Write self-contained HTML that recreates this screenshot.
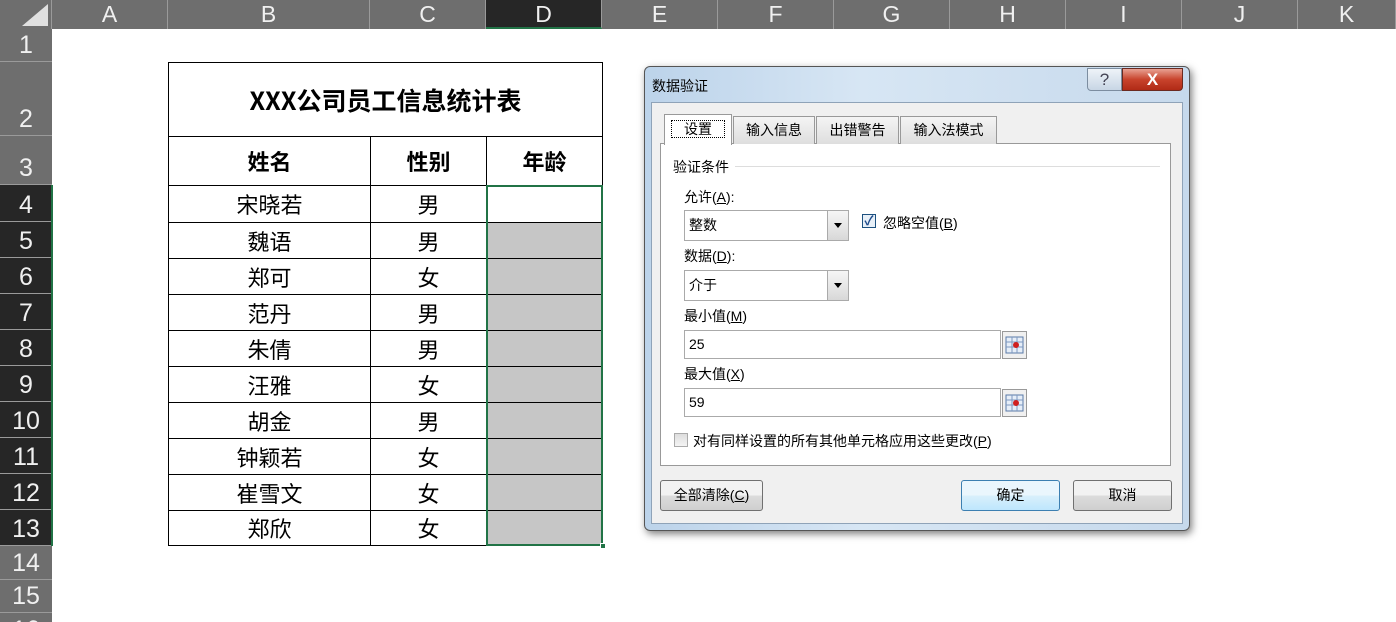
<!DOCTYPE html>
<html><head><meta charset="utf-8"><style>
*{margin:0;padding:0;box-sizing:border-box}
body{width:1396px;height:622px;overflow:hidden;background:#fff;position:relative;font-family:"Liberation Sans","Noto Sans CJK SC",sans-serif}
.a{position:absolute}
.ch{position:absolute;top:0;height:29px;background:#6e6e6e;color:#f0f0f0;font-size:23px;text-align:center;line-height:29px;border-right:1px solid #9a9a9a;font-family:"Liberation Sans Narrow","Liberation Sans",sans-serif}
.rh{position:absolute;left:0;width:52px;background:#6e6e6e;color:#f0f0f0;font-size:25px;text-align:center;border-bottom:1px solid #9a9a9a;font-family:"Liberation Sans Narrow","Liberation Sans",sans-serif;display:flex;align-items:flex-end;justify-content:center;line-height:1;overflow:hidden}
.sel{background:#262626}
.c{position:absolute;border:1px solid #000;display:flex;align-items:center;justify-content:center;font-size:22px;color:#000;font-family:"Noto Sans CJK SC",sans-serif}
.g{background:#c6c6c6}
.d{font-size:14px;color:#000;font-family:"Liberation Sans","Noto Sans CJK SC",sans-serif}
.tab{position:absolute;top:116px;height:28px;border:1px solid #999;border-bottom:none;background:linear-gradient(#f4f4f4,#dedede);font-size:14px;text-align:center;line-height:26px}
.inp{position:absolute;background:#fff;border:1px solid #aaa;font-size:14px;padding-left:4px}
.dd{position:absolute;right:0;top:0;bottom:0;width:21px;border-left:1px solid #aaa;background:linear-gradient(#f6f6f6,#d8d8d8)}
.dd:after{content:"";position:absolute;left:6px;top:12px;border:4px solid transparent;border-top:5px solid #000}
.btn{position:absolute;height:31px;border:1px solid #707070;border-radius:3px;background:linear-gradient(#f2f2f2 50%,#dcdcdc 50%,#cfcfcf);font-size:14px;text-align:center;line-height:29px}
.ref{position:absolute;width:25px;height:28px;border:1px solid #999;background:#f0f0f0}
u{text-decoration:underline}
</style></head><body>
<div class="a" style="left:0;top:0;width:52px;height:29px;background:#6e6e6e;border-right:1px solid #9a9a9a"></div>
<div class="a" style="left:22px;top:4px;width:0;height:0;border-left:26px solid transparent;border-bottom:22px solid #e0e0e0"></div>
<div class="ch" style="left:52px;width:116px">A</div>
<div class="ch" style="left:168px;width:202px">B</div>
<div class="ch" style="left:370px;width:116px">C</div>
<div class="ch sel" style="left:486px;width:116px;border-bottom:2px solid #217346">D</div>
<div class="ch" style="left:602px;width:116px">E</div>
<div class="ch" style="left:718px;width:116px">F</div>
<div class="ch" style="left:834px;width:116px">G</div>
<div class="ch" style="left:950px;width:116px">H</div>
<div class="ch" style="left:1066px;width:116px">I</div>
<div class="ch" style="left:1182px;width:116px">J</div>
<div class="ch" style="left:1298px;width:98px">K</div>
<div class="rh" style="top:29px;height:33px;padding-bottom:3px">1</div>
<div class="rh" style="top:62px;height:74px;padding-bottom:3px">2</div>
<div class="rh" style="top:136px;height:49px;padding-bottom:3px">3</div>
<div class="rh sel" style="top:185px;height:37px;padding-bottom:3px">4</div>
<div class="rh sel" style="top:222px;height:36px;padding-bottom:3px">5</div>
<div class="rh sel" style="top:258px;height:36px;padding-bottom:3px">6</div>
<div class="rh sel" style="top:294px;height:36px;padding-bottom:3px">7</div>
<div class="rh sel" style="top:330px;height:36px;padding-bottom:3px">8</div>
<div class="rh sel" style="top:366px;height:36px;padding-bottom:3px">9</div>
<div class="rh sel" style="top:402px;height:36px;padding-bottom:3px">10</div>
<div class="rh sel" style="top:438px;height:36px;padding-bottom:3px">11</div>
<div class="rh sel" style="top:474px;height:36px;padding-bottom:3px">12</div>
<div class="rh sel" style="top:510px;height:36px;padding-bottom:3px">13</div>
<div class="rh" style="top:546px;height:34px;padding-bottom:3px">14</div>
<div class="rh" style="top:580px;height:33px;padding-bottom:3px">15</div>
<div class="rh" style="top:613px;height:9px;align-items:flex-start;padding-top:5px;border-bottom:none">16</div>
<div class="a" style="left:51px;top:185px;width:2px;height:361px;background:#217346"></div>

<div class="c" style="left:168px;top:62px;width:435px;height:75px;font-size:25px;font-weight:600">XXX公司员工信息统计表</div>
<div class="c" style="left:168px;top:136px;width:203px;height:50px;font-weight:600">姓名</div>
<div class="c" style="left:370px;top:136px;width:117px;height:50px;font-weight:600">性别</div>
<div class="c" style="left:486px;top:136px;width:117px;height:50px;font-weight:600">年龄</div>

<div class="c" style="left:168px;top:185px;width:203px;height:38px">宋晓若</div><div class="c" style="left:370px;top:185px;width:117px;height:38px">男</div><div class="c" style="left:486px;top:185px;width:117px;height:38px"></div>
<div class="c" style="left:168px;top:222px;width:203px;height:37px">魏语</div><div class="c" style="left:370px;top:222px;width:117px;height:37px">男</div><div class="c g" style="left:486px;top:222px;width:117px;height:37px"></div>
<div class="c" style="left:168px;top:258px;width:203px;height:37px">郑可</div><div class="c" style="left:370px;top:258px;width:117px;height:37px">女</div><div class="c g" style="left:486px;top:258px;width:117px;height:37px"></div>
<div class="c" style="left:168px;top:294px;width:203px;height:37px">范丹</div><div class="c" style="left:370px;top:294px;width:117px;height:37px">男</div><div class="c g" style="left:486px;top:294px;width:117px;height:37px"></div>
<div class="c" style="left:168px;top:330px;width:203px;height:37px">朱倩</div><div class="c" style="left:370px;top:330px;width:117px;height:37px">男</div><div class="c g" style="left:486px;top:330px;width:117px;height:37px"></div>
<div class="c" style="left:168px;top:366px;width:203px;height:37px">汪雅</div><div class="c" style="left:370px;top:366px;width:117px;height:37px">女</div><div class="c g" style="left:486px;top:366px;width:117px;height:37px"></div>
<div class="c" style="left:168px;top:402px;width:203px;height:37px">胡金</div><div class="c" style="left:370px;top:402px;width:117px;height:37px">男</div><div class="c g" style="left:486px;top:402px;width:117px;height:37px"></div>
<div class="c" style="left:168px;top:438px;width:203px;height:37px">钟颖若</div><div class="c" style="left:370px;top:438px;width:117px;height:37px">女</div><div class="c g" style="left:486px;top:438px;width:117px;height:37px"></div>
<div class="c" style="left:168px;top:474px;width:203px;height:37px">崔雪文</div><div class="c" style="left:370px;top:474px;width:117px;height:37px">女</div><div class="c g" style="left:486px;top:474px;width:117px;height:37px"></div>
<div class="c" style="left:168px;top:510px;width:203px;height:36px">郑欣</div><div class="c" style="left:370px;top:510px;width:117px;height:36px">女</div><div class="c g" style="left:486px;top:510px;width:117px;height:36px"></div>
<div class="a" style="left:486px;top:185px;width:117px;height:361px;border:2px solid #217346"></div>
<div class="a" style="left:600px;top:543px;width:6px;height:6px;background:#217346;border:1px solid #fff"></div>

<div class="a" style="left:644px;top:66px;width:546px;height:465px;border:1px solid #555;border-radius:6px;background:linear-gradient(90deg,#bcd3ea,#d7e6f4 40%,#c6d9ec);box-shadow:2px 3px 8px rgba(0,0,0,.5)"></div>
<div class="a d" style="left:652px;top:76px">数据验证</div>
<div class="a" style="left:1087px;top:68px;width:35px;height:23px;border:1px solid #7c8da0;border-radius:0 0 0 4px;background:linear-gradient(#eef3f8,#c8d6e5);text-align:center;font-size:17px;color:#445;line-height:21px">?</div>
<div class="a" style="left:1122px;top:68px;width:61px;height:23px;border:1px solid #6b2a20;border-radius:0 0 4px 0;background:linear-gradient(#e8a192,#c8432c 50%,#b02a16);text-align:center;color:#fff;font-size:17px;font-weight:bold;line-height:21px">X</div>
<div class="a" style="left:651px;top:102px;width:532px;height:422px;background:#f0f0f0;border:1px solid #8fa3b8"></div>
<div class="a" style="left:660px;top:143px;width:511px;height:323px;background:#fff;border:1px solid #999"></div>
<div class="tab" style="left:664px;top:114px;height:31px;width:68px;background:#fff;line-height:28px"><span style="border:1px dotted #000;padding:0 12px">设置</span></div>
<div class="tab" style="left:733px;width:82px">输入信息</div>
<div class="tab" style="left:816px;width:83px">出错警告</div>
<div class="tab" style="left:900px;width:97px">输入法模式</div>
<div class="a d" style="left:673px;top:157px">验证条件</div>
<div class="a" style="left:735px;top:166px;width:425px;height:1px;background:#ddd"></div>
<div class="a d" style="left:684px;top:187px">允许(<u>A</u>):</div>
<div class="inp" style="left:684px;top:210px;width:165px;height:31px;line-height:29px">整数<div class="dd"></div></div>
<div class="a" style="left:862px;top:214px;width:14px;height:14px;border:1px solid #1d5180;background:#e8f0f8;color:#1d4a8a;font-size:13px;line-height:12px;text-align:center;font-weight:bold">✓</div>
<div class="a d" style="left:883px;top:213px">忽略空值(<u>B</u>)</div>
<div class="a d" style="left:684px;top:246px">数据(<u>D</u>):</div>
<div class="inp" style="left:684px;top:270px;width:165px;height:31px;line-height:29px">介于<div class="dd"></div></div>
<div class="a d" style="left:684px;top:306px">最小值(<u>M</u>)</div>
<div class="inp" style="left:684px;top:330px;width:317px;height:29px;line-height:27px">25</div>
<div class="ref" style="left:1002px;top:331px"><svg width="23" height="26"><rect x="3" y="5" width="17" height="16" fill="#e6eef8" stroke="#5a7aa8"/><path d="M3 10H20M3 15H20M9 5V21M14 5V21" stroke="#7d98c0"/><circle cx="13" cy="13" r="3" fill="#d02020"/></svg></div>
<div class="a d" style="left:684px;top:364px">最大值(<u>X</u>)</div>
<div class="inp" style="left:684px;top:388px;width:317px;height:29px;line-height:27px">59</div>
<div class="ref" style="left:1002px;top:389px"><svg width="23" height="26"><rect x="3" y="5" width="17" height="16" fill="#e6eef8" stroke="#5a7aa8"/><path d="M3 10H20M3 15H20M9 5V21M14 5V21" stroke="#7d98c0"/><circle cx="13" cy="13" r="3" fill="#d02020"/></svg></div>
<div class="a" style="left:674px;top:433px;width:14px;height:14px;border:1px solid #aaa;background:linear-gradient(#ddd,#f4f4f4)"></div>
<div class="a d" style="left:693px;top:431px">对有同样设置的所有其他单元格应用这些更改(<u>P</u>)</div>
<div class="btn" style="left:660px;top:480px;width:103px">全部清除(<u>C</u>)</div>
<div class="btn" style="left:961px;top:480px;width:99px;border-color:#3c7fb1;background:linear-gradient(#eaf6fd 50%,#d9f0fc 50%,#bee6fd)">确定</div>
<div class="btn" style="left:1073px;top:480px;width:99px">取消</div>
</body></html>
